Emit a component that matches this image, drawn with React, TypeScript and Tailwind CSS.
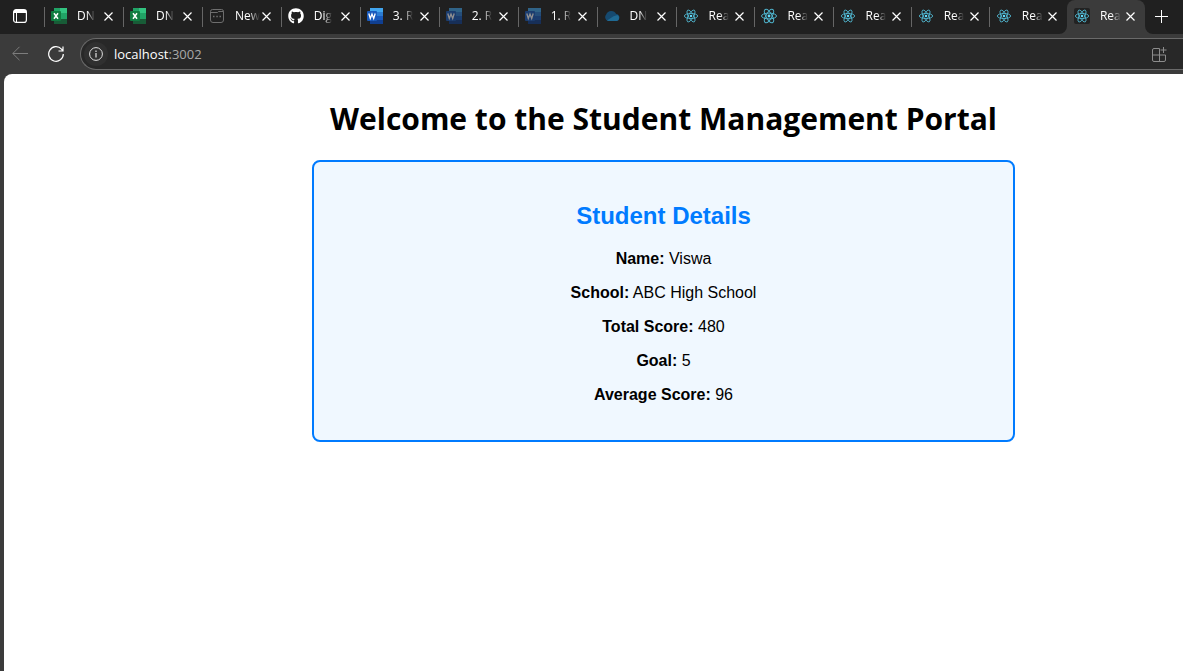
import type { ReactNode } from "react";
import { FaGithub } from "react-icons/fa";

function ExcelIcon() {
  return (
    <svg viewBox="0 0 16 16" className="size-4" aria-hidden="true">
      <rect x="3" y="0" width="7" height="5" fill="#21a366" />
      <rect x="9" y="0" width="7" height="5" fill="#33c481" />
      <rect x="3" y="5" width="7" height="6" fill="#107c41" />
      <rect x="9" y="5" width="7" height="6" fill="#21a366" />
      <rect x="3" y="11" width="13" height="5" fill="#185c37" />
      <rect x="0" y="3" width="10" height="10" rx="1" fill="#107c41" />
      <path d="M3 5.2 7 10.8M7 5.2 3 10.8" stroke="#fff" strokeWidth="1.5" />
    </svg>
  );
}

function WordIcon({ dim = false }: { dim?: boolean }) {
  return (
    <svg viewBox="0 0 16 16" className={dim ? "size-4 opacity-50" : "size-4"} aria-hidden="true">
      <rect x="3" y="0" width="13" height="4" fill="#41a5ee" />
      <rect x="3" y="4" width="13" height="4" fill="#2b7cd3" />
      <rect x="3" y="8" width="13" height="4" fill="#185abd" />
      <rect x="3" y="12" width="13" height="4" fill="#103f91" />
      <rect x="0" y="3" width="10" height="10" rx="1" fill="#185abd" />
      <path d="M1.8 5.5 3.3 10.5 5 6 6.7 10.5 8.2 5.5" fill="none" stroke="#fff" strokeWidth="1.3" />
    </svg>
  );
}

function NewPageIcon() {
  return (
    <svg viewBox="0 0 16 16" className="size-4" fill="none" stroke="#6e6e6e" aria-hidden="true">
      <path d="M3.500 1.500H12.500A2 2 0 0 1 14.500 3.500V12A2.500 2.500 0 0 1 12 14.500H4A2.500 2.500 0 0 1 1.500 12V3.500A2 2 0 0 1 3.500 1.500ZM1.500 4.500H8.500L9.500 3.500H14.500" />
      <path d="M4 8.500H5.500M7.300 8.500H8.800M10.500 8.500H12" strokeWidth="1.500" />
    </svg>
  );
}

function CloudIcon() {
  return (
    <svg viewBox="0 0 16 16" className="size-4" aria-hidden="true">
      <path d="M4 13A4 4 0 0 1 2.200 6.500 5.500 5.500 0 0 1 12.200 6 3.600 3.600 0 0 1 13 13Z" fill="#164a70" />
      <path d="M3 12.500 9.500 8.200 13.500 7A3.400 3.400 0 0 1 13 13H4Z" fill="#1f6a94" />
    </svg>
  );
}

function ReactIcon({ large = false, boxed = false }: { large?: boolean; boxed?: boolean }) {
  return (
    <svg
      viewBox={large ? "-8 -8 16 16" : "-9 -9 18 18"}
      className={boxed ? "size-4 rounded-xs bg-[#222222]" : "size-4"}
      fill="none"
      stroke="#4fb3cc"
      aria-hidden="true"
    >
      <ellipse rx="7.500" ry="2.900" />
      <ellipse rx="7.500" ry="2.900" transform="rotate(60)" />
      <ellipse rx="7.500" ry="2.900" transform="rotate(120)" />
      <circle r="1.400" fill="#61dafb" stroke="none" />
    </svg>
  );
}

type Tab = { title: string; icon: ReactNode; narrow?: boolean; active?: boolean };

const tabs: Tab[] = [
  { title: "DN", icon: <ExcelIcon /> },
  { title: "DN", icon: <ExcelIcon /> },
  { title: "New", icon: <NewPageIcon /> },
  { title: "Dig", icon: <FaGithub className="size-4 text-white" aria-hidden="true" /> },
  { title: "3. R", icon: <WordIcon /> },
  { title: "2. R", icon: <WordIcon dim /> },
  { title: "1. R", icon: <WordIcon dim /> },
  { title: "DN", icon: <CloudIcon /> },
  { title: "Rea", icon: <ReactIcon /> },
  { title: "Rea", icon: <ReactIcon large />, narrow: true },
  { title: "Rea", icon: <ReactIcon />, narrow: true },
  { title: "Rea", icon: <ReactIcon />, narrow: true },
  { title: "Rea", icon: <ReactIcon />, narrow: true },
  { title: "Rea", icon: <ReactIcon boxed />, narrow: true, active: true },
];

function TabItem({ title, icon, narrow, active }: Tab) {
  return (
    <div
      className={`relative flex h-full min-w-0 items-center pr-1.5 pb-0.5 pl-[7px] ${narrow ? "flex-[78]" : "flex-[79]"} ${
        active ? "rounded-t-lg bg-[#3b3b3b]" : ""
      }`}
    >
      {active ? (
        <>
          <svg viewBox="0 0 8 8" className="absolute bottom-0 -left-2 size-2" aria-hidden="true">
            <path d="M8 0V8H0A8 8 0 0 0 8 0Z" fill="#3b3b3b" />
          </svg>
          <svg viewBox="0 0 8 8" className="absolute -right-2 bottom-0 size-2" aria-hidden="true">
            <path d="M0 0V8H8A8 8 0 0 1 0 0Z" fill="#3b3b3b" />
          </svg>
        </>
      ) : (
        <span className="absolute top-[7px] left-0 h-5 w-px bg-[#666666]" />
      )}
      <button type="button" className="flex min-w-0 flex-1 items-center gap-2.5 text-left">
        <span className="shrink-0">{icon}</span>
        <span className="mask-r-from-55% text-xs leading-4 whitespace-nowrap text-white">{title}</span>
      </button>
      <button type="button" aria-label="Close tab" className="shrink-0 p-1">
        <svg viewBox="0 0 9 9" className="size-[9px]" stroke="#fff" strokeWidth="1.200" aria-hidden="true">
          <path d="M0.500 0.500 8.500 8.500M8.500 0.500 0.500 8.500" />
        </svg>
      </button>
    </div>
  );
}

function BrowserTabs() {
  return (
    <div className="flex h-[34px] items-center bg-[#202020]">
      <button type="button" aria-label="Tab actions" className="flex w-11 shrink-0 justify-center pr-1 pb-0.5">
        <svg viewBox="0 0 14 14" className="size-3.5" fill="none" stroke="#fff" aria-hidden="true">
          <rect x="0.600" y="0.600" width="12.800" height="12.800" rx="2.500" strokeWidth="1.200" />
          <path d="M1 2.500H13" strokeWidth="3" />
          <path d="M3.500 3V13" />
        </svg>
      </button>
      {tabs.map((tab, i) => (
        <TabItem key={i} {...tab} />
      ))}
      <button type="button" aria-label="New tab" className="flex w-[38px] shrink-0 justify-center pr-1 pb-0.5">
        <svg viewBox="0 0 15 15" className="size-[15px]" stroke="#fff" aria-hidden="true">
          <path d="M7.500 1V14M1 7.500H14" />
        </svg>
      </button>
    </div>
  );
}

function AddressBar() {
  return (
    <div className="flex h-10 items-center bg-[#3b3b3b]">
      <button type="button" aria-label="Back" className="flex w-10 shrink-0 justify-center">
        <svg viewBox="0 0 16 16" className="size-4" fill="none" stroke="#7d7d7d" aria-hidden="true">
          <path d="M16 7.500H0.800M7.500 0.800 0.800 7.500 7.500 14.200" />
        </svg>
      </button>
      <button type="button" aria-label="Reload" className="flex w-8 shrink-0 justify-center">
        <svg viewBox="0 0 16 16" className="size-4" fill="none" stroke="#fff" strokeWidth="1.200" aria-hidden="true">
          <path d="M15.300 8A7.300 7.300 0 1 1 13.500 3.200L15 5M15 0.500V5H10.500" />
        </svg>
      </button>
      <div className="ml-2 flex h-8 flex-1 items-center rounded-l-full border border-r-0 border-[#6a6a6a] bg-[#282828] pr-4 pl-[3px]">
        <button
          type="button"
          aria-label="View site information"
          className="flex size-6 items-center justify-center rounded-full bg-[#303030]"
        >
          <svg viewBox="0 0 14 14" className="size-3.5" fill="none" stroke="#e0e0e0" aria-hidden="true">
            <circle cx="7" cy="7" r="6.400" />
            <path d="M7 6V10.500M7 3.500V5" strokeWidth="1.200" />
          </svg>
        </button>
        <a href="http://localhost:3002" className="ml-1.5 flex-1 text-[13px] leading-4 text-[#a8a8a8]">
          <span className="text-white">localhost</span>:3002
        </a>
        <button type="button" aria-label="App available">
          <svg viewBox="0 0 15 15" className="size-[15px]" fill="none" stroke="#8c8c8c" aria-hidden="true">
            <path d="M7.500 1.500H2A1.500 1.500 0 0 0 0.500 3V13A1.500 1.500 0 0 0 2 14.500H12A1.500 1.500 0 0 0 13.500 13V8H0.500M7.500 1.500V14.500M11.500 0V6M8.500 3H14.500" />
          </svg>
        </button>
      </div>
    </div>
  );
}

const details = [
  { label: "Name:", value: "Viswa" },
  { label: "School:", value: "ABC High School" },
  { label: "Total Score:", value: "480" },
  { label: "Goal:", value: "5" },
  { label: "Average Score:", value: "96" },
];

function StudentCard() {
  return (
    <section className="mx-auto max-w-[703px] rounded-lg border-2 border-[#007bff] bg-[#f0f8ff] px-5 pt-10 pb-9 font-['Liberation_Sans',Arial,sans-serif]">
      <h2 className="text-2xl leading-7 font-bold text-[#007bff]">Student Details</h2>
      <div className="mt-5 flex flex-col gap-4 text-base leading-[18px]">
        {details.map(({ label, value }) => (
          <p key={label}>
            <strong>{label}</strong> {value}
          </p>
        ))}
      </div>
    </section>
  );
}

export default function App() {
  return (
    <div className="flex min-h-screen flex-col bg-[#3b3b3b] font-['Open_Sans','Noto_Sans',sans-serif]">
      <header>
        <BrowserTabs />
        <AddressBar />
      </header>
      <main className="ml-1 flex-1 rounded-tl-lg bg-white pt-6 pl-[140px] text-center text-black">
        <h1 className="mb-5 text-[30px] leading-[42px] font-bold">Welcome to the Student Management Portal</h1>
        <StudentCard />
      </main>
    </div>
  );
}
